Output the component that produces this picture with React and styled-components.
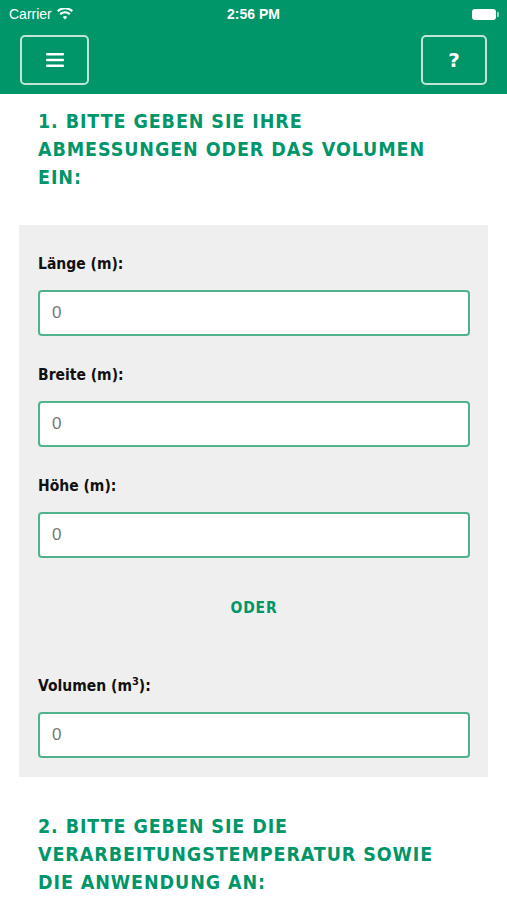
import React from "react";
import styled, { createGlobalStyle } from "styled-components";

const GREEN = "#009669";
const CONDENSED = `"DejaVu Sans Condensed", "DejaVu Sans", sans-serif`;

const Global = createGlobalStyle`
  body {
    margin: 0;
    background: #fff;
    font-family: "Liberation Sans", Arial, sans-serif;
  }
`;

const Page = styled.div`
  width: 507px;
  height: 900px;
  overflow: hidden;
  background: #fff;
`;

const Header = styled.header`
  background: ${GREEN};
  height: 94px;
  display: flex;
  flex-direction: column;
`;

const StatusBar = styled.div`
  height: 28px;
  display: grid;
  grid-template-columns: 1fr auto 1fr;
  align-items: center;
  padding: 0 9px;
  color: #fff;
  font-family: "Liberation Sans", Arial, sans-serif;
  font-size: 14px;
`;

const Carrier = styled.div`
  display: flex;
  align-items: center;
  gap: 5px;
`;

const Clock = styled.div`
  font-weight: bold;
`;

const Battery = styled.div`
  justify-self: end;
  width: 24px;
  height: 11px;
  border-radius: 3px;
  background: #fff;
  position: relative;
  margin-right: 2px;
  &::after {
    content: "";
    position: absolute;
    right: -3px;
    top: 3px;
    width: 2px;
    height: 5px;
    border-radius: 0 1px 1px 0;
    background: rgba(255, 255, 255, 0.6);
  }
`;

const NavBar = styled.div`
  flex: 1;
  display: flex;
  justify-content: space-between;
  align-items: flex-start;
  padding: 7px 20px 0 20px;
`;

const NavButton = styled.button`
  width: ${(p) => p.$w}px;
  height: 50px;
  border: 2px solid rgba(255, 255, 255, 0.75);
  border-radius: 5px;
  background: transparent;
  color: #fff;
  display: flex;
  align-items: center;
  justify-content: center;
  font-family: "DejaVu Sans", sans-serif;
  font-weight: bold;
  font-size: 20px;
  padding: 0;
`;

const Heading = styled.h2`
  margin: 0;
  padding: ${(p) => p.$pad};
  font-family: ${CONDENSED};
  font-weight: bold;
  font-size: 19.5px;
  line-height: 28px;
  letter-spacing: 0.9px;
  color: ${GREEN};
`;

const Panel = styled.section`
  margin: 0 19px;
  background: #efefef;
  padding: 29px 18px 19px 19px;
  display: flex;
  flex-direction: column;
`;

const Field = styled.div`
  display: flex;
  flex-direction: column;
  margin-bottom: ${(p) => p.$mb || 0}px;
`;

const Label = styled.label`
  font-family: ${CONDENSED};
  font-weight: bold;
  font-size: 15.5px;
  color: #111;
  line-height: 20px;
  margin-bottom: 16px;
  sup {
    font-size: 11px;
    line-height: 0;
  }
`;

const Input = styled.input`
  box-sizing: border-box;
  height: 46px;
  width: 100%;
  border: 2px solid #4fb48c;
  border-radius: 4px;
  background: #fff;
  padding: 0 12px;
  font-family: "Liberation Sans", Arial, sans-serif;
  font-size: 17px;
  color: #333;
  outline: none;
  &::placeholder {
    color: #777;
  }
`;

const Or = styled.div`
  text-align: center;
  font-family: ${CONDENSED};
  font-weight: bold;
  font-size: 15.5px;
  letter-spacing: 0.8px;
  color: ${GREEN};
  margin: 41px 0 59px;
`;

const Wifi = () => (
  <svg width="16" height="12" viewBox="0 0 16 12">
    <path d="M8 11.5l2.2-2.6a3.3 3.3 0 0 0-4.4 0z" fill="#fff" />
    <path d="M3.9 6.9a6 6 0 0 1 8.2 0l1.4-1.6a8.2 8.2 0 0 0-11 0z" fill="#fff" />
    <path d="M1.3 3.9a10 10 0 0 1 13.4 0l1.3-1.6a12.1 12.1 0 0 0-16 0z" fill="#fff" />
  </svg>
);

const Burger = () => (
  <svg width="18" height="16" viewBox="0 0 18 16">
    <rect x="0" y="1" width="18" height="2.6" rx="1" fill="#fff" />
    <rect x="0" y="6.7" width="18" height="2.6" rx="1" fill="#fff" />
    <rect x="0" y="12.4" width="18" height="2.6" rx="1" fill="#fff" />
  </svg>
);

const fields = [
  { label: "Länge (m):" },
  { label: "Breite (m):" },
  { label: "Höhe (m):" },
];

export default function App() {
  return (
    <Page>
      <Global />
      <Header>
        <StatusBar>
          <Carrier>
            Carrier <Wifi />
          </Carrier>
          <Clock>2:56 PM</Clock>
          <Battery />
        </StatusBar>
        <NavBar>
          <NavButton $w={69}>
            <Burger />
          </NavButton>
          <NavButton $w={66}>?</NavButton>
        </NavBar>
      </Header>

      <Heading $pad="14px 40px 33px 38px">
        1. BITTE GEBEN SIE IHRE ABMESSUNGEN ODER DAS VOLUMEN EIN:
      </Heading>

      <Panel>
        {fields.map((f, i) => (
          <Field key={f.label} $mb={i < 2 ? 29 : 0}>
            <Label>{f.label}</Label>
            <Input placeholder="0" />
          </Field>
        ))}
        <Or>ODER</Or>
        <Field>
          <Label>
            Volumen (m<sup>3</sup>):
          </Label>
          <Input placeholder="0" />
        </Field>
      </Panel>

      <Heading $pad="36px 40px 0 38px">
        2. BITTE GEBEN SIE DIE VERARBEITUNGSTEMPERATUR SOWIE DIE ANWENDUNG AN:
      </Heading>
    </Page>
  );
}
